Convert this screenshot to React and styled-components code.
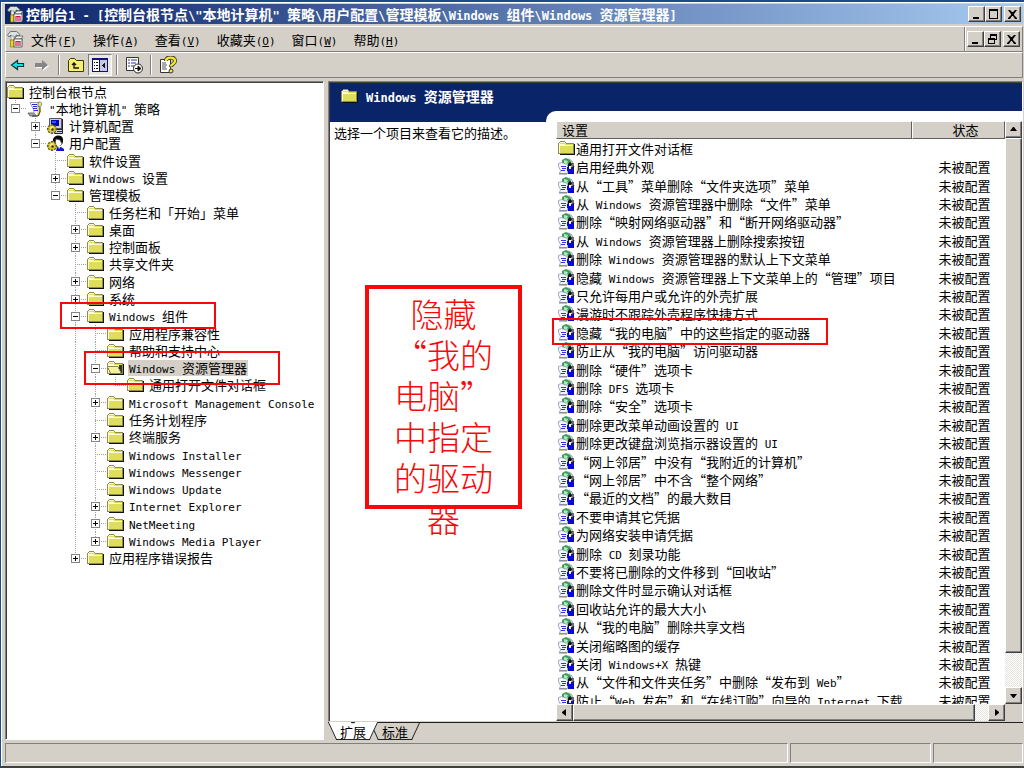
import React from 'react';
import styled, { createGlobalStyle, css, ThemeProvider } from 'styled-components';

const theme = {
  color: {
    face: '#d4d0c8',
    light: '#ffffff',
    shadow: '#808080',
    dark: '#404040',
    navy: '#0a246a',
    red: '#f80808',
  },
  font: {
    cjk: '"Noto Sans CJK SC", sans-serif',
    latin: '"DejaVu Sans Mono", "Noto Sans CJK SC", monospace',
  },
};

const raised = css`
  border: 1px solid;
  border-color: #fff #404040 #404040 #fff;
  box-shadow: inset -1px -1px 0 #808080;
  background: ${(props) => props.theme.color.face};
`;

const GlobalStyle = createGlobalStyle`
  * {
    box-sizing: border-box;
  }
  body {
    margin: 0;
    background: #d4d0c8;
  }
  button {
    padding: 0;
    margin: 0;
    border: 0;
    background: none;
    color: inherit;
    font: inherit;
  }
  svg {
    display: block;
    flex: none;
  }
`;

/* ---------- text ---------- */

const Latin = styled.span`
  font-family: ${(props) => props.theme.font.latin};
  font-size: ${(props) => (props.$bold ? 12 : 11)}px;
  line-height: 1;
  white-space: pre;
`;

const Text = ({ children, bold }) => children
  .split(/([\x20-\x7e]+)/)
  .filter(Boolean)
  .map((part, i) => (/^[\x20-\x7e]/.test(part)
    ? <Latin key={i} $bold={bold}>{part}</Latin>
    : <React.Fragment key={i}>{part}</React.Fragment>));

/* ---------- icons ---------- */

const FolderIcon = ({ open }) => (
  <svg width="17" height="16" viewBox="0 0 17 16" shapeRendering="crispEdges" aria-hidden="true">
    <path d="M2 14h14V4h1v11H2z" fill="#111" />
    <path d="M0 3h1V2h1V1h5v1h1v1h8v11H0z" fill="#8e8e48" />
    <path d="M1 3h1V2h5v1h1v1h7v9H1z" fill="#dede5a" />
    <path d="M1 3h1V2h5v1H2v1h5v1h8v1H2v7H1z" fill="#fcfcd8" />
    {open && (
      <>
        <path d="M0 6h11v1h1v2h1v2h1v3H3v-2H2v-2H1V8H0z" fill="#8c8c50" />
        <path d="M1 7h10v2h1v2h1v2H4v-1H3v-2H2V8H1z" fill="#f2f2a0" />
        <path d="M12 5h3v8h-1v-2h-1V9h-1z" fill="#333" />
      </>
    )}
  </svg>
);

const ScrollIcon = () => (
  <svg width="17" height="16" viewBox="0 0 17 16" aria-hidden="true">
    <path d="M1 12h7l2 3H3z" fill="#a8a8a8" stroke="#555" strokeWidth="0.8" />
    <path d="M3 1.500h9l-1 3 2 5-1 5H9l-2-3-1-4z" fill="#f8f8ff" stroke="#8888a0" strokeWidth="0.8" />
    <path d="M11 1.500c4-2 5 3 2 4h-2z" fill="#f0ec60" stroke="#666" strokeWidth="0.8" />
    <path d="M11 6l2 4-1 4-3 1c3-3 1-6 0-8z" fill="#e4dc30" />
    <path d="M5 3.500h5M6 5.500h4M6 7.500h4M7 9.500h4" stroke="#2828e0" />
    <path d="M13 6v5l-2 4H5" fill="none" stroke="#222" strokeWidth="0.9" />
  </svg>
);

const Gear = () => (
  <>
    <path d="M5 6v10M0 11h10M1.500 7.500l7 7M8.500 7.500l-7 7" stroke="#6c6000" strokeWidth="2.400" />
    <circle cx="5" cy="11" r="3.500" fill="#d8c820" />
    <path d="M3 10l2-2 2 1-2 1-1 2z" fill="#fffca0" />
    <circle cx="5.500" cy="11.500" r="1.200" fill="#333" />
  </>
);

const ComputerIcon = () => (
  <svg width="17" height="17" viewBox="0 0 17 17" aria-hidden="true">
    <path d="M14 1h2v13h-3z" fill="#222" />
    <path d="M2.500 0.500h12v10h-12z" fill="#d0d0d8" stroke="#555" />
    <path d="M4 2h8v6H4z" fill="#0808b8" />
    <path d="M5 3h4v2H5z" fill="#2858ff" />
    <path d="M7.500 11.500h8v4h-8z" fill="#d8d8e0" stroke="#222" />
    <path d="M10 13.500h5" stroke="#1818b0" />
    <Gear />
  </svg>
);

const UserIcon = () => (
  <svg width="17" height="17" viewBox="0 0 17 17" aria-hidden="true">
    <path d="M6 6c-1-6 9-8 10-2 0 3 0 5-2 6L8 8z" fill="#080808" />
    <path d="M9 4l4 1 1 2 1 2-2 2-4 1-1-3z" fill="#fff" stroke="#444" strokeWidth="0.6" />
    <path d="M9 16l1-4h4l3 2v2z" fill="#1414c8" />
    <path d="M11 11l1 3 2-3z" fill="#fff" />
    <Gear />
  </svg>
);

const PolicyIcon = () => (
  <svg width="17" height="17" viewBox="0 0 17 17" aria-hidden="true">
    <path d="M5 1l6-1 3 3 2 4-1 6H5z" fill="#dde2ec" />
    <path d="M4 2l4-2 4 2 2 4-3 2-3-2-4 1z" fill="#3f9a62" />
    <path d="M6 2l4 1-1 2 3 2-2 1-4-3z" fill="#a8ecb8" />
    <path d="M11 1l3 2 1 3" fill="none" stroke="#99a" strokeWidth="0.8" />
    <path d="M10 6l2-2 2 2-1 3h-3z" fill="#101010" />
    <path d="M0.500 5.500l3-1 6 2v9h-8l1-3-2-4z" fill="#f4f4ff" stroke="#9096ac" strokeWidth="0.8" />
    <path d="M3 8.500h5M4 10.500h4M3 12.500h4" stroke="#2a34e0" />
    <path d="M9 9h2v2h2V9h3v7h-6v-3H9z" fill="#0808d8" />
    <path d="M15 5v4M16 8l-2 3" stroke="#223" strokeWidth="1.200" />
    <path d="M11 8h2v2h-2z" fill="#fff" />
    <path d="M1 16h8" stroke="#666" strokeWidth="0.8" />
  </svg>
);

const ConsoleIcon = () => (
  <svg width="17" height="17" viewBox="0 0 17 17" aria-hidden="true">
    <path d="M0.500 4l3-3.500h6l3.500 3-1 1.500-3-1v2H4V4L2 6z" fill="#d8e4e4" stroke="#555" strokeWidth="0.8" />
    <path d="M4 5h3v4H4z" fill="#f2f2f2" stroke="#777" strokeWidth="0.6" />
    <path d="M3.500 9h3.500v7H3.500z" fill="#e8d820" stroke="#776800" strokeWidth="0.6" />
    <path d="M7 8l3-3h6l-2 3z" fill="#f4f4f4" stroke="#555" strokeWidth="0.7" />
    <path d="M7 8h8v8H7z" fill="#fff" stroke="#444" strokeWidth="0.8" />
    <path d="M15 8l1-3v8l-1 3z" fill="#888" />
    <path d="M9 15v-4.500h4V15M11 10.500V15" fill="none" stroke="#d01848" strokeWidth="1.200" />
  </svg>
);

const ArrowIcon = ({ forward }) => (
  <svg width="16" height="12" viewBox="0 0 16 12" aria-hidden="true">
    {forward ? (
      <>
        <path d="M2 5h7V2l6 5-6 5V9H2z" fill="#fff" />
        <path d="M1 4h7V1l6 5-6 5V8H1z" fill="#868686" />
      </>
    ) : (
      <path d="M13.500 4.500h-6v-3l-6 4.500 6 4.500v-3h6z" fill="#18e0e0" stroke="#003840" strokeWidth="1.200" />
    )}
  </svg>
);

const UpIcon = () => (
  <svg width="18" height="16" viewBox="0 0 18 16" aria-hidden="true">
    <path d="M1.500 14.500v-11l2-2h4l2 2h7v11z" fill="#f6f070" stroke="#383800" />
    <path d="M7 6v5h5M5 8l2-2 2 2" fill="none" stroke="#111" strokeWidth="1.300" />
  </svg>
);

const TreePaneIcon = () => (
  <svg width="16" height="14" viewBox="0 0 16 14" shapeRendering="crispEdges" aria-hidden="true">
    <path d="M0 0h16v14H0z" fill="#101078" />
    <path d="M1 2h6v11H1z" fill="#fff" />
    <path d="M8 2h7v11H8z" fill="#c4c8e0" />
    <path d="M2 4h1v1H2zM4 4h2v1H4zM2 7h1v1H2zM4 7h2v1H4zM2 10h1v1H2zM4 10h2v1H4z" fill="#111" />
    <path d="M13 5v5h-1V9h-1V8h-1V7h1V6h1V5z" fill="#111" />
  </svg>
);

const ExportIcon = () => (
  <svg width="18" height="18" viewBox="0 0 18 18" aria-hidden="true">
    <path d="M1.500 1.500h12v13h-12z" fill="#fff" stroke="#333" />
    <path d="M3 4h2M6 4h6M3 7h2M6 7h5M3 10h2M6 10h3" stroke="#283898" />
    <circle cx="13" cy="12.500" r="4.500" fill="#fff" stroke="#222" />
    <path d="M10 12.500h4M13 10l3 2.500-3 2.500z" stroke="#111" fill="#111" />
  </svg>
);

const HelpIcon = () => (
  <svg width="18" height="18" viewBox="0 0 18 18" aria-hidden="true">
    <path d="M1.500 3.500h10v13h-10z" fill="#fff" stroke="#333" />
    <path d="M3 7h4M3 9h5M3 11h4M3 13h5" stroke="#555" />
    <path d="M7 5c0-5 9-5 9 0 0 3-4 3-4 6" fill="none" stroke="#333" strokeWidth="4" />
    <path d="M7 5c0-4.500 9-4.500 9 0 0 3-4 3-4 5.500" fill="none" stroke="#f4ec20" strokeWidth="2.400" />
    <circle cx="12" cy="15" r="2" fill="#f4ec20" stroke="#333" />
  </svg>
);

const glyphs = {
  minimize: 'M3 9h6v2H3z',
  maximize: 'M2 1h9v10H2zM3 3v7h7V3z',
  restore: 'M4 1h7v6H9v4H2V5h2zM5 3v2h4v1h1V3zM3 7v3h5V7z',
  close: 'M2 2h2l2 2 1 0 2-2h2L8 6v1l3 3v1H9L7 8H6l-2 3H2v-1l3-3V6z',
  up: 'M6 4h1l3 4H3z',
  down: 'M3 5h7L7 9H6z',
  left: 'M8 3v7L4 7V6z',
  right: 'M5 3v7l4-3V6z',
};

const Glyph = ({ name }) => (
  <svg width="13" height="13" viewBox="0 0 13 13" aria-hidden="true">
    <path d={glyphs[name]} fill="#000" fillRule="evenodd" />
  </svg>
);

/* ---------- window frame ---------- */

const Window = styled.div`
  position: relative;
  display: flex;
  flex-direction: column;
  height: 100vh;
  padding: 2px 1px 2px 4px;
  overflow: hidden;
  background: ${(props) => props.theme.color.face};
  border: 1px solid #1c4c88;
  border-width: 2px 0 2px 1px;
  border-bottom-color: ${(props) => props.theme.color.dark};
  box-shadow: inset 1px 1px 0 #fff;
  font-family: ${(props) => props.theme.font.cjk};
  font-size: 13px;
  line-height: 17px;
  color: #000;
`;

const TitleBar = styled.header`
  display: flex;
  align-items: center;
  flex: none;
  height: 20px;
  padding: 0 2px;
  gap: 2px;
  background: linear-gradient(90deg, ${(props) => props.theme.color.navy}, #a6caf0);
  color: #fff;
`;

const Title = styled.h1`
  flex: 1;
  margin: 0;
  overflow: hidden;
  font-size: 14px;
  font-weight: 700;
  line-height: 18px;
  white-space: nowrap;
`;

const Controls = styled.div`
  display: flex;
  flex: none;
  align-items: center;
  & > :last-child {
    margin-left: 2px;
  }
`;

const ControlButton = styled.button`
  ${raised};
  display: flex;
  align-items: center;
  justify-content: center;
  width: 17px;
  height: 16px;
`;

const band = css`
  display: flex;
  align-items: center;
  flex: none;
  border: 1px solid;
  border-color: #fff #808080 #808080 #fff;
`;

const MenuBar = styled.nav`
  ${band};
  height: 26px;
  margin-top: 2px;
  padding-left: 1px;
`;

const Menus = styled.div`
  display: flex;
  flex: 1;
  gap: 16px;
  padding-left: 7px;
`;

const MenuButton = styled.button`
  line-height: 17px;
  white-space: nowrap;
`;

const MenuControls = styled(Controls)`
  align-self: stretch;
  padding: 0 2px;
  border-left: 1px solid ${(props) => props.theme.color.shadow};
  box-shadow: inset 1px 0 0 #fff;
`;

const ToolBar = styled.div`
  ${band};
  height: 26px;
`;

const ToolButton = styled.button`
  display: flex;
  align-items: center;
  justify-content: center;
  width: 24px;
  height: 22px;
  ${(props) => props.$pressed && css`
    border: 1px solid;
    border-color: #808080 #fff #fff #808080;
    background: #eae8e4;
  `}
`;

const ToolDivider = styled.span`
  width: 2px;
  height: 20px;
  margin: 0 4px;
  border-left: 1px solid #808080;
  border-right: 1px solid #fff;
`;

const Body = styled.div`
  display: flex;
  flex: 1;
  gap: 4px;
  min-height: 0;
  padding-top: 3px;
`;

const sunken = css`
  border: 1px solid;
  border-color: #808080 #fff #fff #808080;
  box-shadow: inset 1px 1px 0 #404040;
`;

/* ---------- tree ---------- */

const TreePane = styled.aside`
  ${sunken};
  flex: 0 0 319px;
  padding: 1px;
  overflow: hidden;
  background: #fff;
`;

const Tree = styled.ul`
  display: grid;
  grid-auto-rows: 1fr;
  height: 484px;
  margin: 0;
  padding: 0;
  list-style: none;
`;

const TreeRow = styled.li`
  display: flex;
  align-items: center;
  min-height: 0;
`;

const dots = '#a0a0a0 0 1px, transparent 1px 2px';

const Guide = styled.span`
  display: flex;
  flex: 0 0 20px;
  align-items: center;
  align-self: stretch;
  padding-left: 4px;
  background-image:
    repeating-linear-gradient(180deg, ${dots}),
    repeating-linear-gradient(90deg, ${dots});
  background-repeat: no-repeat;
  background-position: 8px 0, 8px 50%;
  background-size:
    1px ${(props) => ({ full: '100%', half: '50%', none: '0' }[props.$line])},
    ${(props) => (props.$branch ? '12px 1px' : '0 0')};
`;

const Expander = styled.button`
  width: 9px;
  height: 9px;
  border: 1px solid #848484;
  background:
    linear-gradient(#000, #000) center / 5px 1px no-repeat,
    linear-gradient(#000, #000) center / ${(props) => (props.$open ? '0 0' : '1px 5px')} no-repeat,
    #fff;
`;

const TreeLabel = styled.span`
  margin-left: 4px;
  padding: 0 1px;
  line-height: 16px;
  white-space: nowrap;
  background: ${(props) => (props.$selected ? props.theme.color.face : 'transparent')};
`;

const treeRows = [
  { level: 0, label: '控制台根节点' },
  { level: 1, label: '"本地计算机" 策略', icon: 'scroll', state: 'open' },
  { level: 2, label: '计算机配置', icon: 'computer', state: 'closed' },
  { level: 2, label: '用户配置', icon: 'user', state: 'open' },
  { level: 3, label: '软件设置' },
  { level: 3, label: 'Windows 设置', state: 'closed' },
  { level: 3, label: '管理模板', state: 'open' },
  { level: 4, label: '任务栏和「开始」菜单' },
  { level: 4, label: '桌面', state: 'closed' },
  { level: 4, label: '控制面板', state: 'closed' },
  { level: 4, label: '共享文件夹' },
  { level: 4, label: '网络', state: 'closed' },
  { level: 4, label: '系统', state: 'closed' },
  { level: 4, label: 'Windows 组件', state: 'open' },
  { level: 5, label: '应用程序兼容性' },
  { level: 5, label: '帮助和支持中心' },
  { level: 5, label: 'Windows 资源管理器', icon: 'openFolder', state: 'open', selected: true },
  { level: 6, label: '通用打开文件对话框' },
  { level: 5, label: 'Microsoft Management Console', state: 'closed' },
  { level: 5, label: '任务计划程序' },
  { level: 5, label: '终端服务', state: 'closed' },
  { level: 5, label: 'Windows Installer' },
  { level: 5, label: 'Windows Messenger' },
  { level: 5, label: 'Windows Update' },
  { level: 5, label: 'Internet Explorer', state: 'closed' },
  { level: 5, label: 'NetMeeting', state: 'closed' },
  { level: 5, label: 'Windows Media Player', state: 'closed' },
  { level: 4, label: '应用程序错误报告', state: 'closed' },
];

const treeIcons = {
  scroll: <ScrollIcon />,
  computer: <ComputerIcon />,
  user: <UserIcon />,
  openFolder: <FolderIcon open />,
};

// true when a later sibling exists at the given level
const continues = (index, level) => {
  const next = treeRows.slice(index + 1).find((row) => row.level <= level);
  return Boolean(next) && next.level === level;
};

const TreeItem = ({ row, index }) => (
  <TreeRow role="treeitem" aria-level={row.level + 1} aria-selected={Boolean(row.selected)}>
    {Array.from({ length: row.level }, (_, i) => {
      const level = i + 1;
      const own = level === row.level;
      const more = continues(index, level);
      return (
        <Guide key={level} $branch={own} $line={more ? 'full' : own ? 'half' : 'none'}>
          {own && row.state && (
            <Expander $open={row.state === 'open'} aria-label={row.label} />
          )}
        </Guide>
      );
    })}
    {treeIcons[row.icon] || <FolderIcon />}
    <TreeLabel $selected={row.selected}><Text>{row.label}</Text></TreeLabel>
  </TreeRow>
);

/* ---------- details ---------- */

const Details = styled.main`
  display: flex;
  flex: 1;
  flex-direction: column;
  min-width: 0;
`;

const DetailsPane = styled.section`
  ${sunken};
  display: flex;
  flex: 1;
  min-height: 0;
  padding: 2px 0 0 1px;
  border-bottom-color: ${(props) => props.theme.color.face};
  background: linear-gradient(${(props) => props.theme.color.navy} 40px, #fff 40px);
`;

const Description = styled.div`
  flex: 0 0 216px;
`;

const DetailsTitle = styled.h2`
  display: flex;
  align-items: center;
  gap: 8px;
  height: 38px;
  margin: 0;
  padding: 0 0 14px 11px;
  color: #fff;
  font-size: 14px;
  line-height: 20px;
  white-space: nowrap;
`;

const Hint = styled.p`
  margin: 0;
  padding: 2px 4px;
`;

const Sheet = styled.div`
  display: grid;
  flex: 1;
  grid-template-columns: minmax(0, 1fr) 17px;
  grid-template-rows: minmax(0, 1fr) 17px;
  min-width: 0;
  margin-top: 27px;
  padding: 10px 0 0 10px;
  border-top-left-radius: 10px;
  background: #fff;
`;

const TableClip = styled.div`
  overflow: hidden;
`;

const Table = styled.table`
  width: 100%;
  height: 589px;
  border-collapse: separate;
  border-spacing: 0;
  table-layout: fixed;
  line-height: 17px;
`;

const HeadCell = styled.th`
  width: ${(props) => props.$width || 'auto'};
  height: 18px;
  padding: 0 0 0 ${(props) => (props.$center ? 14 : 5)}px;
  border: 1px solid;
  border-color: #fff #606060 #606060 #fff;
  background: ${(props) => props.theme.color.face};
  font-weight: 400;
  line-height: 14px;
  text-align: ${(props) => (props.$center ? 'center' : 'left')};
`;

const Cell = styled.td`
  height: 17px;
  padding: 0 0 0 ${(props) => (props.$center ? 12 : 2)}px;
  text-align: ${(props) => (props.$center ? 'center' : 'left')};
  white-space: nowrap;
`;

const Setting = styled.span`
  display: flex;
  align-items: center;
  gap: 1px;
  height: 17px;
`;

const settings = [
  '启用经典外观',
  '从“工具”菜单删除“文件夹选项”菜单',
  '从 Windows 资源管理器中删除“文件”菜单',
  '删除“映射网络驱动器”和“断开网络驱动器”',
  '从 Windows 资源管理器上删除搜索按钮',
  '删除 Windows 资源管理器的默认上下文菜单',
  '隐藏 Windows 资源管理器上下文菜单上的“管理”项目',
  '只允许每用户或允许的外壳扩展',
  '漫游时不跟踪外壳程序快捷方式',
  '隐藏“我的电脑”中的这些指定的驱动器',
  '防止从“我的电脑”访问驱动器',
  '删除“硬件”选项卡',
  '删除 DFS 选项卡',
  '删除“安全”选项卡',
  '删除更改菜单动画设置的 UI',
  '删除更改键盘浏览指示器设置的 UI',
  '“网上邻居”中没有“我附近的计算机”',
  '“网上邻居”中不含“整个网络”',
  '“最近的文档”的最大数目',
  '不要申请其它凭据',
  '为网络安装申请凭据',
  '删除 CD 刻录功能',
  '不要将已删除的文件移到“回收站”',
  '删除文件时显示确认对话框',
  '回收站允许的最大大小',
  '从“我的电脑”删除共享文档',
  '关闭缩略图的缓存',
  '关闭 Windows+X 热键',
  '从“文件和文件夹任务”中删除“发布到 Web”',
  '防止“Web 发布”和“在线订购”向导的 Internet 下载',
];

const ScrollTrack = styled.div`
  display: flex;
  flex-direction: ${(props) => (props.$vertical ? 'column' : 'row')};
  background: repeating-conic-gradient(#fff 0 25%, #e4e2dc 0 50%) 0 0 / 2px 2px;
`;

const ScrollButton = styled.button`
  ${raised};
  display: flex;
  flex: 0 0 17px;
  align-items: center;
  justify-content: center;
`;

const ScrollThumb = styled.div`
  ${raised};
  flex: ${(props) => props.$size};
`;

const ScrollRest = styled.div`
  flex: ${(props) => props.$size};
`;

const ScrollCorner = styled.div`
  background: ${(props) => props.theme.color.face};
`;

const ScrollBar = ({ vertical, size, rest }) => (
  <ScrollTrack $vertical={vertical}>
    <ScrollButton aria-label={vertical ? '向上' : '向左'}>
      <Glyph name={vertical ? 'up' : 'left'} />
    </ScrollButton>
    <ScrollThumb $size={size} />
    <ScrollRest $size={rest} />
    <ScrollButton aria-label={vertical ? '向下' : '向右'}>
      <Glyph name={vertical ? 'down' : 'right'} />
    </ScrollButton>
  </ScrollTrack>
);

/* ---------- tabs and status ---------- */

const Tabs = styled.div`
  display: flex;
  flex: none;
  height: 18px;
  padding-left: 4px;
  border-top: 1px solid #202020;
`;

const Tab = styled.button`
  position: relative;
  z-index: ${(props) => (props.$active ? 1 : 0)};
  width: 42px;
  height: ${(props) => (props.$active ? 18 : 17)}px;
  margin-top: ${(props) => (props.$active ? -1 : 0)}px;
  line-height: 16px;
  &::before,
  &::after {
    content: '';
    position: absolute;
    z-index: -1;
    top: 0;
    bottom: 0;
    width: 52%;
    border-bottom: 1px solid #202020;
    background: ${(props) => (props.$active ? '#fff' : props.theme.color.face)};
  }
  &::before {
    left: 0;
    border-left: 1px solid #202020;
    transform: skewX(25deg);
  }
  &::after {
    right: 0;
    border-right: 1px solid #202020;
    transform: skewX(-25deg);
  }
`;

// fills the wedge that the two slanted halves leave open
const TabText = styled.span`
  display: block;
  height: 15px;
  margin: 0 8px;
  line-height: 15px;
  background: ${(props) => (props.$active ? '#fff' : props.theme.color.face)};
`;

const StatusBar = styled.footer`
  display: flex;
  flex: none;
  gap: 2px;
  height: 21px;
  margin-top: 3px;
`;

const StatusField = styled.div`
  flex: ${(props) => props.$flex};
  height: 20px;
  border: 1px solid;
  border-color: #808080 #fff #fff #808080;
`;

/* ---------- annotations ---------- */

const Mark = styled.div`
  position: absolute;
  z-index: 2;
  left: ${(props) => props.$x}px;
  top: ${(props) => props.$y}px;
  width: ${(props) => props.$w}px;
  height: ${(props) => props.$h}px;
  border: 2px solid ${(props) => props.theme.color.red};
  pointer-events: none;
`;

const Note = styled(Mark)`
  padding: 4px 24px;
  border-width: 4px;
  color: ${(props) => props.theme.color.red};
  font-size: 33px;
  font-weight: 300;
  line-height: 41px;
  text-align: center;
`;

const menus = [
  ['文件', 'F'],
  ['操作', 'A'],
  ['查看', 'V'],
  ['收藏夹', 'O'],
  ['窗口', 'W'],
  ['帮助', 'H'],
];

const App = () => (
  <ThemeProvider theme={theme}>
    <GlobalStyle />
    <Window lang="zh-CN">
      <TitleBar>
        <ConsoleIcon />
        <Title>
          <Text bold>{'控制台1 - [控制台根节点\\"本地计算机" 策略\\用户配置\\管理模板\\Windows 组件\\Windows 资源管理器]'}</Text>
        </Title>
        <Controls>
          <ControlButton aria-label="最小化"><Glyph name="minimize" /></ControlButton>
          <ControlButton aria-label="最大化"><Glyph name="maximize" /></ControlButton>
          <ControlButton aria-label="关闭"><Glyph name="close" /></ControlButton>
        </Controls>
      </TitleBar>

      <MenuBar>
        <ConsoleIcon />
        <Menus>
          {menus.map(([label, key]) => (
            <MenuButton key={key}>
              {label}
              <Latin>
                (
                <u>{key}</u>
                )
              </Latin>
            </MenuButton>
          ))}
        </Menus>
        <MenuControls>
          <ControlButton aria-label="最小化"><Glyph name="minimize" /></ControlButton>
          <ControlButton aria-label="还原"><Glyph name="restore" /></ControlButton>
          <ControlButton aria-label="关闭"><Glyph name="close" /></ControlButton>
        </MenuControls>
      </MenuBar>

      <ToolBar>
        <ToolButton aria-label="后退"><ArrowIcon /></ToolButton>
        <ToolButton aria-label="前进"><ArrowIcon forward /></ToolButton>
        <ToolDivider />
        <ToolButton aria-label="上移一级"><UpIcon /></ToolButton>
        <ToolButton aria-label="显示/隐藏树" aria-pressed="true" $pressed><TreePaneIcon /></ToolButton>
        <ToolDivider />
        <ToolButton aria-label="导出列表"><ExportIcon /></ToolButton>
        <ToolDivider />
        <ToolButton aria-label="帮助"><HelpIcon /></ToolButton>
      </ToolBar>

      <Body>
        <TreePane>
          <Tree role="tree">
            {treeRows.map((row, index) => (
              <TreeItem key={`${row.level}-${row.label}`} row={row} index={index} />
            ))}
          </Tree>
        </TreePane>

        <Details>
          <DetailsPane>
            <Description>
              <DetailsTitle>
                <FolderIcon />
                <span><Text bold>Windows 资源管理器</Text></span>
              </DetailsTitle>
              <Hint>选择一个项目来查看它的描述。</Hint>
            </Description>
            <Sheet>
              <TableClip>
                <Table>
                  <thead>
                    <tr>
                      <HeadCell scope="col">设置</HeadCell>
                      <HeadCell scope="col" $width="93px" $center>状态</HeadCell>
                    </tr>
                  </thead>
                  <tbody>
                    <tr>
                      <Cell>
                        <Setting>
                          <FolderIcon />
                          <span>通用打开文件对话框</span>
                        </Setting>
                      </Cell>
                      <Cell $center />
                    </tr>
                    {settings.map((name) => (
                      <tr key={name}>
                        <Cell>
                          <Setting>
                            <PolicyIcon />
                            <span><Text>{name}</Text></span>
                          </Setting>
                        </Cell>
                        <Cell $center>未被配置</Cell>
                      </tr>
                    ))}
                  </tbody>
                </Table>
              </TableClip>
              <ScrollBar vertical size={514} rest={34} />
              <ScrollBar size={401} rest={13} />
              <ScrollCorner />
            </Sheet>
          </DetailsPane>
          <Tabs role="tablist">
            <Tab role="tab" aria-selected="true" $active><TabText $active>扩展</TabText></Tab>
            <Tab role="tab" aria-selected="false"><TabText>标准</TabText></Tab>
          </Tabs>
        </Details>
      </Body>

      <StatusBar>
        <StatusField $flex={784} />
        <StatusField $flex={140} />
        <StatusField $flex={88} />
      </StatusBar>

      <Mark $x={59} $y={300} $w={156} $h={27} />
      <Mark $x={83} $y={349} $w={196} $h={34} />
      <Mark $x={551} $y={316} $w={276} $h={27} />
      <Note $x={364} $y={283} $w={157} $h={224}>隐藏“我的电脑”中指定的驱动器</Note>
    </Window>
  </ThemeProvider>
);

export default App;
